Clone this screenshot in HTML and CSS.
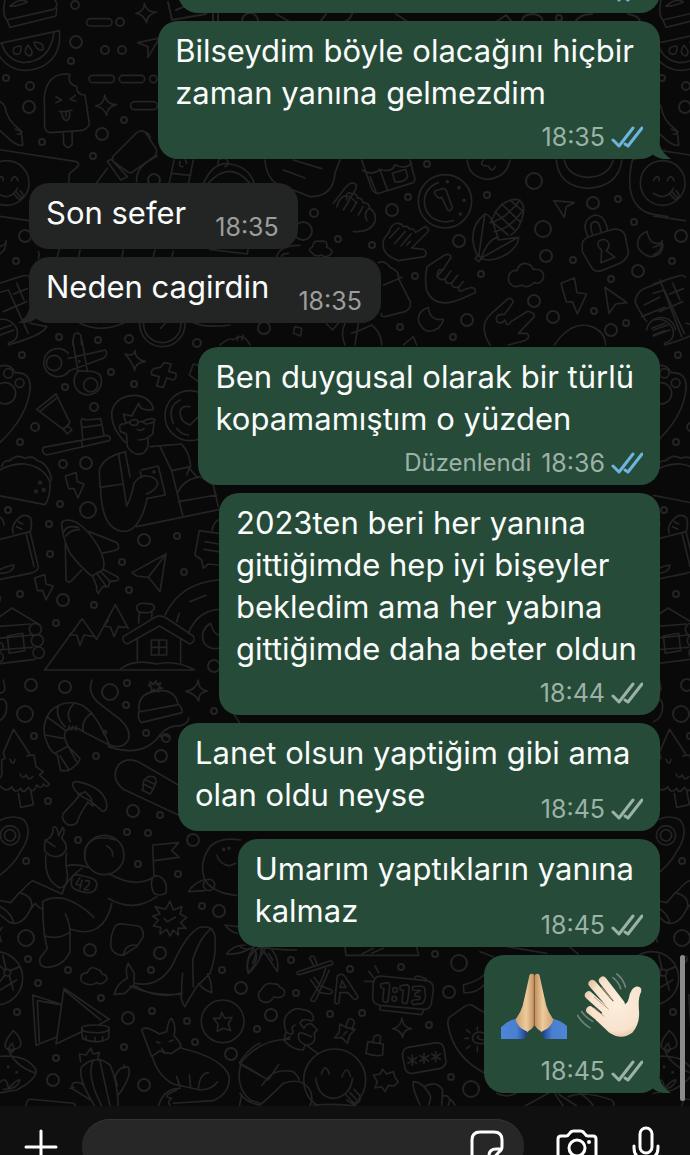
FILE: index.html
```html
<!DOCTYPE html>
<html lang="tr">
<head>
  <meta charset="UTF-8" />
  <meta name="viewport" content="width=device-width, initial-scale=1.0"/>
  <title>Sohbet</title>
  <link rel="stylesheet" href="styles.css">
</head>
<body>

  <!-- wallpaper -->
  <svg class="wallpaper" viewBox="0 0 690 1155" preserveAspectRatio="xMidYMin slice" aria-hidden="true">
    <defs>
      <symbol id="ticks" viewBox="0 0 32 22">
        <path d="M2 14 L8 20 L22 2 M14 18 L17 20 L31 2" fill="none" stroke="currentColor" stroke-width="3" stroke-linecap="round" stroke-linejoin="round"/>
      </symbol>
      <symbol id="tail" viewBox="0 0 20 20">
        <path d="M8 0 C8 7 11 14 20 20 C12 21 5 19 0 14 Z" fill="currentColor" stroke="none"/>
      </symbol>
    </defs>
    <g id="tile">
      <g class="dots">
        <circle cx="75" cy="5" r="4"/><circle cx="76" cy="42" r="6"/><circle cx="105" cy="50" r="4"/><circle cx="122" cy="50" r="4"/>
        <circle cx="71" cy="61" r="3"/><circle cx="120" cy="22" r="4"/><circle cx="6" cy="78" r="3"/><circle cx="30" cy="86" r="4"/>
        <circle cx="29" cy="107" r="6"/><circle cx="42" cy="142" r="3"/><circle cx="124" cy="120" r="3"/><circle cx="102" cy="134" r="6"/>
        <circle cx="93" cy="156" r="3"/><circle cx="25" cy="236" r="6"/><circle cx="16" cy="261" r="3"/><circle cx="154" cy="180" r="6"/>
        <circle cx="314" cy="213" r="4"/><circle cx="303" cy="231" r="9"/><circle cx="338" cy="239" r="3"/><circle cx="372" cy="245" r="3"/>
        <circle cx="59" cy="337" r="3"/><circle cx="98" cy="340" r="3"/><circle cx="129" cy="339" r="4"/><circle cx="197" cy="343" r="4"/><circle cx="264" cy="328" r="6"/>
        <circle cx="427" cy="164" r="3"/><circle cx="408" cy="197" r="3"/><circle cx="392" cy="210" r="6"/><circle cx="487" cy="195" r="3"/>
        <circle cx="534" cy="181" r="8"/><circle cx="593" cy="203" r="6"/><circle cx="618" cy="199" r="3"/><circle cx="634" cy="222" r="3"/>
        <circle cx="543" cy="229" r="8"/><circle cx="459" cy="241" r="6"/><circle cx="546" cy="256" r="6"/><circle cx="573" cy="260" r="3"/>
        <circle cx="638" cy="271" r="6"/><circle cx="415" cy="276" r="3"/><circle cx="481" cy="274" r="3"/><circle cx="611" cy="279" r="3"/>
        <circle cx="534" cy="301" r="6"/><circle cx="553" cy="317" r="6"/><circle cx="594" cy="311" r="3"/><circle cx="626" cy="323" r="3"/>
        <circle cx="611" cy="330" r="6"/><circle cx="467" cy="320" r="6"/><circle cx="400" cy="327" r="3"/><circle cx="453" cy="337" r="3"/>
        <circle cx="22" cy="355" r="3"/><circle cx="111" cy="372" r="3"/><circle cx="65" cy="387" r="3"/><circle cx="134" cy="384" r="3"/>
        <circle cx="94" cy="407" r="4"/><circle cx="35" cy="427" r="4"/><circle cx="20" cy="442" r="3"/><circle cx="63" cy="464" r="4"/>
        <circle cx="86" cy="463" r="6"/><circle cx="60" cy="504" r="3"/><circle cx="88" cy="510" r="8"/><circle cx="8" cy="510" r="3"/>
        <circle cx="49" cy="524" r="3"/><circle cx="144" cy="540" r="6"/><circle cx="177" cy="536" r="3"/><circle cx="50" cy="554" r="3"/>
        <circle cx="122" cy="562" r="3"/><circle cx="184" cy="572" r="3"/><circle cx="129" cy="590" r="3"/><circle cx="20" cy="594" r="3"/>
        <circle cx="63" cy="600" r="6"/><circle cx="94" cy="605" r="3"/><circle cx="56" cy="623" r="3"/><circle cx="214" cy="666" r="6"/>
        <circle cx="31" cy="685" r="6"/><circle cx="65" cy="687" r="6"/><circle cx="110" cy="692" r="8"/><circle cx="127" cy="683" r="3"/>
        <circle cx="126" cy="705" r="3"/><circle cx="25" cy="714" r="8"/><circle cx="34" cy="736" r="3"/><circle cx="214" cy="711" r="3"/>
        <circle cx="146" cy="733" r="3"/><circle cx="166" cy="738" r="4"/><circle cx="96" cy="756" r="3"/><circle cx="161" cy="756" r="6"/>
        <circle cx="48" cy="801" r="3"/><circle cx="133" cy="811" r="6"/><circle cx="160" cy="815" r="3"/><circle cx="127" cy="832" r="3"/>
        <circle cx="148" cy="833" r="3"/><circle cx="78" cy="840" r="3"/><circle cx="26" cy="861" r="3"/><circle cx="193" cy="840" r="6"/>
        <circle cx="138" cy="864" r="3"/><circle cx="178" cy="874" r="3"/><circle cx="202" cy="906" r="3"/><circle cx="219" cy="911" r="6"/>
        <circle cx="26" cy="938" r="8"/><circle cx="90" cy="950" r="6"/><circle cx="28" cy="959" r="3"/><circle cx="160" cy="953" r="6"/>
        <circle cx="68" cy="970" r="3"/><circle cx="151" cy="970" r="3"/><circle cx="38" cy="983" r="3"/><circle cx="222" cy="970" r="3"/>
        <circle cx="241" cy="988" r="6"/><circle cx="101" cy="998" r="3"/><circle cx="17" cy="1012" r="3"/><circle cx="128" cy="1018" r="6"/>
        <circle cx="152" cy="1011" r="3"/><circle cx="187" cy="1021" r="3"/><circle cx="195" cy="1042" r="3"/><circle cx="257" cy="1029" r="3"/>
        <circle cx="124" cy="1047" r="3"/><circle cx="56" cy="1058" r="3"/><circle cx="53" cy="1080" r="6"/><circle cx="231" cy="1054" r="6"/><circle cx="144" cy="1085" r="6"/>
        <circle cx="291" cy="960" r="3"/><circle cx="350" cy="969" r="3"/><circle cx="401" cy="967" r="3"/><circle cx="435" cy="954" r="3"/>
        <circle cx="459" cy="963" r="8"/><circle cx="296" cy="993" r="3"/><circle cx="449" cy="992" r="6"/><circle cx="271" cy="1015" r="6"/>
        <circle cx="330" cy="1014" r="3"/><circle cx="362" cy="1013" r="3"/><circle cx="429" cy="1025" r="3"/><circle cx="451" cy="1077" r="3"/><circle cx="471" cy="1089" r="8"/>
      </g>

      <!-- top left: burger, melon, ice cream, bottle -->
      <g transform="scale(.3333)">
        <path d="M15 0 Q5 40 20 60 L160 28 Q178 20 165 0 M22 62 L30 82 L168 48 L170 26 M30 18 Q60 -8 82 6 Q50 20 30 18"/>
        <path d="M-8 132 L178 92 Q186 170 125 200 Q40 235 -8 160 M6 132 Q20 180 70 188 Q150 185 162 98"/>
        <path d="M62 138 Q30 140 44 162 Q66 168 62 138 M84 136 Q66 160 88 168 Q106 160 84 136 M102 126 Q108 152 128 150 Q136 128 102 126"/>
        <rect x="260" y="56" width="76" height="22" rx="11"/><rect x="267" y="226" width="76" height="22" rx="11"/><rect x="358" y="226" width="76" height="22" rx="11"/><rect x="392" y="305" width="80" height="24" rx="11"/><circle cx="460" cy="237" r="11"/>
        <path d="M433 10 Q440 38 470 36 Q440 44 440 68 Q430 42 408 40 Q434 34 433 10Z"/>
        <path d="M314 285 Q320 314 349 314 Q320 322 320 346 Q312 322 287 318 Q314 312 314 285Z"/>
        <path d="M413 128 L480 114 M413 128 L444 140 L444 172 L475 120"/>
        <path d="M134 380 L133 290 Q140 222 200 222 L210 224 Q200 250 230 260 Q230 285 255 285 L268 372 Q262 390 240 392 L150 398 Q136 396 134 380Z M190 397 L191 432 Q204 452 217 432 L216 395"/>
        <path d="M168 290 L185 300 L168 308 M226 286 L210 298 L228 304 M178 334 Q200 336 216 330 M184 336 Q188 360 200 362 Q212 356 208 334 M198 337 V350"/>
        <path d="M-8 300 Q10 310 15 320 Q20 360 60 390 Q66 400 68 436 Q50 440 20 410 L-8 385 M46 388 L66 395 Q64 405 52 402"/>
        <path d="M340 468 L408 400 Q420 388 435 396 L468 446 Q474 460 462 470 L395 518 Q385 520 378 512 L342 486 Q334 478 340 468Z M322 484 L362 540 L382 530 L334 478Z M425 393 Q445 395 452 412 M472 468 Q405 500 410 545 M322 505 L290 548"/>
        <path d="M-8 448 L225 484 Q242 488 233 500 L208 522 L206 548 M-8 648 L88 662"/>
        <circle cx="20" cy="549" r="67"/><path d="M34 542 Q44 518 54 542 M-8 542 Q8 518 10 542 M-8 580 Q30 605 52 565 M40 580 L58 600 Q72 592 68 582 L60 572 M48 575 L64 594"/>
        <path d="M508 548 L522 480 M566 548 L580 480 M514 520 L572 526 M540 484 Q536 502 548 500 M560 490 L556 480 M612 548 Q640 484 690 492 Q745 500 762 548 M626 548 Q690 480 748 548 M655 498 Q650 470 676 475 Q695 490 675 500 M795 480 Q800 560 880 570 L930 590 Q1000 590 1005 520 L1020 480 M850 510 L915 534 M880 480 L965 506 M1010 620 Q1030 560 1070 610"/>
        <path d="M-8 852 L60 830 Q84 822 88 832 M-8 880 L25 870 L85 1000 M40 882 L82 866 M50 850 L72 900 M10 935 L80 905 M90 970 L140 980 Q130 1005 25 1035 M-8 960 Q30 950 50 985 Q60 1020 25 1030 M-8 990 L35 975 M-8 1008 L42 990 M-8 742 Q20 735 18 722 Q20 755 -8 765"/>
        <path d="M115 755 Q120 765 115 775 M178 748 L172 770 M240 750 L236 770 M370 750 L366 770 M465 750 L460 770 M520 755 L515 770 M630 748 L742 762 L744 748 M830 770 Q840 735 900 736 M845 770 Q845 760 865 760 M938 740 Q938 720 960 724 Q985 720 980 742 Q1005 750 990 765 Q975 775 965 765 Q945 772 938 760Q920 750 938 740"/>
        <circle cx="487" cy="972" r="68"/><circle cx="487" cy="972" r="56"/><path d="M482 985 L505 960 M218 1035 L222 1005 Q230 992 242 1005 L245 1035 M240 970 Q300 1000 370 970 M660 1035 Q690 1010 700 1020 Q730 995 750 1035 M712 1022 L715 1008 M725 1020 L730 1006 M580 968 Q620 985 690 975 M880 1000 L885 980 L905 985 L902 1008Z M980 972 L998 990 L1015 970"/>
      </g>

      <!-- top strip between bubbles -->
      <path d="M168 2 L172 20 L206 14 M176 10 L200 0 M213 14 V22 M218 14 V22 M242 21 A8 8 0 0 1 258 21 M276 14 L290 22 M326 14 L320 22 M352 14 Q350 20 344 22 M396 14 Q405 20 408 22 M496 22 L506 15 L512 22 M522 22 Q522 14 534 14 Q544 16 542 22 M575 22 Q580 14 592 14 M628 14 Q640 16 640 22"/><circle cx="559" cy="18" r="3"/>

      <!-- right of the incoming messages -->
      <g transform="translate(345 0) scale(.3333)">
        <path d="M50 480 L78 560 Q84 582 102 580 L205 548 Q214 540 205 520 L195 480 M52 510 Q80 530 105 508 Q140 520 150 494 Q180 510 200 490 M105 510 L128 572 M75 530 L95 580 M142 520 L150 545 Q180 548 188 530 L182 508Z M367 480 Q370 530 425 538 Q485 535 495 480 M415 480 Q400 500 430 498 Q440 520 452 500 M634 480 Q640 560 730 565 Q820 560 831 480 M658 480 Q670 530 730 532 Q790 530 805 480"/>
        <circle cx="300" cy="604" r="80"/><path d="M280 548 Q236 565 238 610 Q245 660 300 666 L325 662 M270 582 Q264 572 280 570 L294 566 Q300 564 304 572 L322 622 Q318 636 308 630 L290 592 Q282 600 270 582"/>
        <circle cx="307" cy="545" r="3"/><circle cx="342" cy="563" r="3"/><circle cx="357" cy="601" r="3"/><circle cx="346" cy="642" r="3"/>
        <path d="M-35 610 L2 562 Q20 540 34 555 Q36 570 12 598 M5 600 Q0 570 22 582 Q35 578 38 595 Q52 592 54 608 Q74 608 74 625 Q96 640 90 665 Q75 700 25 694 M-5 630 L14 600 M18 635 L36 605 M40 645 L54 620 M72 625 Q54 640 66 662"/>
        <path d="M130 700 Q140 668 160 670 Q172 672 175 680 Q190 676 194 688 Q208 684 212 698 L240 680 Q256 686 248 696 L200 744 L236 748 Q250 758 238 770 L160 782 Q100 760 118 715Z M134 714 L162 684 M148 732 L180 695 M168 738 L198 702 M185 735 L196 724"/>
        <path d="M246 800 L298 766 Q316 758 318 772 L292 812 Q280 800 276 830 Q290 845 298 836 Q305 856 318 848 Q324 868 340 860 Q340 880 355 870 L380 862 Q394 866 390 878 L350 896 Q270 930 245 872 Q238 840 246 800Z M278 828 L298 804 M300 838 L318 812 M320 850 L338 826 M340 864 L355 844"/>
        <path d="M435 945 L490 895 Q505 895 504 908 L478 944 Q450 940 455 965 Q470 975 480 960 Q486 985 498 965 L548 934 Q570 938 568 950 L520 1000 L545 1000 Q560 1010 540 1022 L490 1035 M435 945 Q400 980 435 1035"/>
        <path d="M398 768 Q360 690 420 642 Q440 640 460 720 M420 642 Q412 690 402 765 M460 720 L520 712 Q525 730 490 760 Q440 790 408 775 Q430 715 460 712 M520 712 L412 772 M390 776 L400 766 L410 775 L402 785Z M438 668 Q460 600 515 598 Q540 605 535 640 Q525 690 498 705 M440 665 L490 705 M450 635 L508 690 M470 612 L525 665 M495 600 L535 635 M435 668 Q480 660 525 600 M448 695 Q490 690 535 630"/>
        <path d="M626 602 L688 608 L664 620 L658 652Z"/>
        <path d="M712 730 Q715 715 738 708 L805 688 Q830 685 840 705 L850 755 Q850 775 825 790 L770 812 Q748 818 738 800 L712 755Z M728 708 Q705 660 750 645 Q780 645 788 692 M742 702 Q730 665 752 665 Q764 666 768 695 M768 788 L770 750 Q750 735 764 722 Q784 712 792 732 Q792 745 784 752 L810 772Z"/>
        <path d="M906 694 Q870 710 880 745 Q910 785 945 760 Q960 735 950 728 Q915 740 906 694Z M250 922 Q215 935 221 965 Q240 1010 280 985 Q300 960 293 958 Q255 965 250 922Z"/>
        <path d="M500 855 Q485 845 493 822 Q505 808 516 812 Q522 790 540 790 Q560 792 564 808 Q600 805 595 835 Q585 855 568 848 Q545 868 530 855 Q510 865 500 855Z"/>
        <path d="M648 850 L688 834 L696 878 L725 882 L697 942 L682 905 L664 906Z M780 862 L846 908 L812 912 L792 940Z"/>
        <path d="M862 480 Q840 580 880 620 Q900 640 930 644 L968 650 M862 480 L960 450 M870 905 Q875 875 900 865 L960 842 M870 905 Q880 930 905 965 M945 840 L1010 1010 M890 950 L960 922 M898 915 L944 892 M905 990 A44 44 0 0 1 992 990 M920 985 L960 970 M925 1005 L960 992"/>
        <path d="M100 788 Q120 780 135 802 Q165 815 160 835 L196 905 Q200 925 180 935 L120 950 Q105 950 110 940 M116 855 L172 832 M628 1035 Q680 960 740 980 Q780 995 782 1035 M175 1035 L205 1010 L215 1035 M0 1035 Q-15 1000 0 970 M20 1000 Q50 990 80 975 Q110 1000 110 1035 M40 970 L30 1035"/>
      </g>

      <!-- scissors, toothbrush, barista, taco, rocket, house -->
      <g transform="translate(0 340) scale(.3333)">
        <circle cx="162" cy="69" r="23"/><path d="M205 40 A42 42 0 1 0 208 92 L310 55 Q326 42 316 30 L205 55 M218 0 L234 95 A41 41 0 1 0 300 105 Q285 92 262 94 L246 0 M232 92 L262 94"/><circle cx="272" cy="135" r="21"/><circle cx="238" cy="64" r="2"/>
        <path d="M405 32 Q405 58 436 64 Q405 68 404 92 Q398 66 375 42 Q402 50 405 32Z M482 82 L492 68 L514 72 L506 94 L528 100 Q530 115 520 120 L500 114 L490 142 L470 138 L478 110 L455 104 Q452 90 462 86Z M568 105 L580 72 L596 76 M568 105 L596 125"/>
        <circle cx="15" cy="160" r="32"/><circle cx="25" cy="100" r="14"/><circle cx="59" cy="129" r="13"/><path d="M-8 82 Q30 65 45 98 Q95 95 90 150 Q80 235 -8 315"/>
        <path d="M110 208 L168 162 L210 248 L190 268Z M120 214 L172 172 M188 266 L205 258 L216 270 L202 282Z M130 322 L322 286 Q336 292 328 302 L140 345 Q122 338 130 322Z M244 302 L248 322 M248 295 L244 250 Q240 230 258 240 L302 236 L312 285 M250 262 L306 254"/>
        <path d="M376 308 Q330 260 336 212 Q350 165 410 166 Q450 172 460 204 M378 248 L370 222 L395 228 L416 190 Q420 215 460 208 M388 246 Q395 236 412 240 Q420 252 405 256 Q390 256 388 246Z M428 245 Q450 232 464 238 Q468 246 450 250 Q435 256 428 245Z M412 246 L428 244 M372 252 L388 246 M372 252 Q352 250 362 275 Q378 280 380 285 L382 320 Q400 350 430 340 Q448 325 444 298 M415 300 Q440 300 458 282 L462 250 M412 268 Q422 275 432 266"/>
        <path d="M300 442 L298 390 Q310 350 378 335 M300 442 L368 432 M302 445 Q305 575 375 574 Q420 570 442 475 M356 344 L380 498 Q395 470 402 430 Q420 405 440 408 Q470 410 474 432 Q468 450 440 462 M376 338 L390 410 M450 320 L545 312 Q570 340 572 380 L515 392 L480 320 M424 390 L475 378 L496 465 L440 476 M420 395 L425 412 M410 560 L660 508 M515 392 L548 526 M535 455 Q550 420 600 410 L640 435 L655 500 M535 485 L650 465 M560 405 L568 385 L590 410"/>
        <circle cx="462" cy="396" r="3"/><circle cx="570" cy="227" r="75"/><path d="M520 250 Q500 200 540 180 M570 200 Q545 195 540 215 Q540 245 570 255 L596 230 M565 285 Q545 285 530 265"/>
        <path d="M-8 395 Q30 370 75 372 Q130 380 150 425 Q152 470 135 494 L-8 466 M5 380 Q10 360 30 362 Q50 340 75 355 Q100 345 112 362 Q145 370 155 420"/><circle cx="120" cy="428" r="4"/><circle cx="108" cy="454" r="4"/><circle cx="131" cy="450" r="4"/>
        <path d="M196 408 L228 398 L232 425 L252 432 L234 474 L222 446 L206 446Z M104 714 L134 704 L138 732 L160 738 L138 780 L128 752 L112 752Z"/>
        <path d="M-8 600 L90 575 L115 680 Q115 695 90 700 L-8 720 M78 580 L102 680 M40 580 Q30 555 62 530 Q80 520 92 535 Q98 560 90 575 M55 545 L68 552 M50 560 L65 568 M-8 530 Q10 530 12 555 M0 700 Q40 700 42 675 Q10 680 -8 695"/>
        <path d="M186 560 Q180 540 205 540 Q250 545 295 620 Q320 670 308 690 L275 708 Q240 680 210 640 Q190 600 186 560Z M192 575 Q200 555 235 562 M198 588 Q210 570 238 568 M268 575 L350 608 Q362 620 350 630 L305 640 M196 610 L198 720 Q205 732 215 722 L245 690 M308 688 L352 710 Q360 720 350 722 L330 724 L325 740 L308 740 L295 760 Q288 755 290 740 L278 708 M292 702 L318 738 M302 695 L330 724"/>
        <path d="M396 698 L498 642 L480 755 L462 732 L445 712 L410 708Z M498 642 L445 712"/>
        <path d="M134 990 L246 836 L290 898 L346 794 L385 866 M225 868 L208 885 L230 885 L240 916 L252 885 L285 890 M325 840 L312 858 L332 862 L342 890 L355 860 L378 862 M134 990 H584 M412 900 V962 M542 900 V968 M370 890 L460 835 Q478 820 500 835 L580 888 Q588 905 570 912 L478 858 L382 912 Q364 905 370 890Z M360 988 Q400 955 470 972 Q530 960 580 988 M416 850 L418 818 M455 832 L456 818 M410 800 Q415 788 435 790 Q465 790 463 805 Q455 820 435 818 Q408 820 410 800Z M454 900 H500 V945 H454Z M477 900 V945 M454 922 H500"/>
        <path d="M495 825 Q540 730 655 720 M565 880 Q590 815 655 808 M570 785 L618 766 M530 845 L538 820 M632 850 Q600 870 610 905 Q625 930 655 925 M632 850 Q640 880 655 885 M598 572 L655 580 M598 572 L585 645 L605 660 L610 685 L625 672 L655 675 M615 605 L655 612 M612 628 L655 635 M636 572 Q640 548 655 540"/>
        <path d="M-8 835 L36 804 L120 855 M-8 860 L90 852 M-8 895 L98 885 M-8 930 L98 922 M-8 972 L105 958 M22 888 L68 880 L74 932 L28 940Z M-8 795 Q5 780 0 770"/><circle cx="106" cy="868" r="18"/><circle cx="112" cy="902" r="18"/><circle cx="116" cy="938" r="17"/><circle cx="-2" cy="920" r="12"/><circle cx="-4" cy="952" r="14"/>
      </g>

      <!-- shrimp, tree, astronaut, whale, fox, cactus -->
      <g transform="translate(0 680) scale(.3333)">
        <path d="M276 0 Q260 40 300 72 L360 118 Q395 150 385 180 Q365 210 330 195 M325 200 Q430 235 480 165 Q505 135 540 138 Q565 130 566 115 M480 170 Q500 160 510 175"/>
        <path d="M328 195 Q290 100 245 75 Q190 55 150 95 Q120 140 140 185 Q150 215 172 225 L182 272 L205 272 Q240 250 240 235 L205 200 Q185 165 200 150 Q225 135 250 155 L328 195 M250 155 Q245 130 260 112 L275 98 M225 68 Q195 95 210 125 M175 78 Q165 110 195 140 M140 110 L195 150 M135 165 L190 175 M165 220 L205 198 M180 228 L206 268 M205 200 L230 245 M205 150 L208 138 M215 150 L218 138 M226 150 L228 138"/><circle cx="314" cy="157" r="5"/>
        <path d="M418 95 Q410 45 460 35 Q525 20 535 75 M416 96 L536 74 Q548 84 546 98 L424 128 Q412 115 416 96Z M445 15 L452 20 L450 5 L460 14 L468 2 L470 14 L482 8 L477 20 L488 25 L474 26 L476 36 L464 28 L454 34 L455 24Z"/>
        <path d="M595 0 Q594 30 622 33 Q594 38 596 63 Q588 42 558 34 Q588 30 595 0Z M700 100 L720 130"/>
        <path d="M-8 300 Q10 290 5 270 L5 240 L15 235 L10 218 L40 148 L72 195 L90 225 L80 228 L102 225 L108 260 L130 275 L118 285 L148 312 Q140 325 130 312 Q125 330 110 315 Q100 345 85 322 Q70 345 62 325 Q45 345 35 320 Q20 340 0 318 M30 238 Q40 262 45 238 M60 282 Q68 300 78 285 Q85 305 98 290 M55 340 L62 382 L100 374 L92 330 M-8 60 Q20 50 20 80 Q20 115 -8 125 M-8 40 Q15 40 15 25 L10 0"/>
        <path d="M220 308 Q225 302 245 308 Q310 325 320 370 Q322 395 308 394 L270 362 Q230 345 218 318Z M234 345 L255 335 L272 352 L280 378 L262 366 M190 400 Q210 380 236 350 M262 370 Q240 400 230 430 Q205 445 190 420 Q185 410 190 400"/>
        <path d="M535 405 L370 328 Q330 295 355 255 Q380 230 415 245 L535 315 M430 325 Q425 300 445 290 Q470 285 468 305 Q460 330 450 342 L425 330Z M430 312 L455 325 M438 300 L462 312"/>
        <circle cx="30" cy="466" r="29"/><circle cx="30" cy="466" r="17"/><path d="M-8 425 Q40 400 72 420 Q100 455 65 510 Q40 560 -8 590"/>
        <path d="M135 515 Q130 485 142 478 Q160 470 160 442 Q172 435 176 468 L188 442 Q198 450 185 475 Q202 490 198 510 Q180 540 148 525Z M135 480 L165 500 M138 525 Q130 600 180 624 Q205 620 202 580 Q195 545 200 520 M198 558 Q230 550 262 562 M186 642 Q195 600 245 565 M-8 660 L32 668 L58 638 M58 640 Q85 610 98 602 L186 642 M60 638 Q100 650 95 680 Q70 740 30 728 L-8 698 M-8 675 Q40 700 40 730 M90 690 L106 670 Q120 690 130 685"/>
        <circle cx="313" cy="525" r="59"/><path d="M256 540 Q245 490 290 475 Q320 470 345 480 M320 498 Q340 508 338 528 M325 580 Q400 625 455 595 M325 655 Q400 700 470 650 M455 602 Q458 585 475 588 Q505 600 498 640 Q478 650 462 640 Q452 620 455 602Z M462 590 L458 495 L536 488 L515 512 L538 532 L462 542 M215 600 Q215 580 240 585 L275 595 Q300 605 285 630 Q270 645 235 632 Q208 625 215 600 M240 592 L228 612 L242 616 M246 600 L240 626 M256 602 Q276 600 265 616 L252 628 L266 630"/>
        <path d="M128 665 Q150 650 190 655 Q240 670 282 712 M128 665 Q128 760 142 805 L120 835 Q115 860 140 862 Q190 860 210 815 L210 745 Q205 720 196 702 M135 768 Q175 780 208 758 M212 748 Q310 780 336 670"/>
        <path d="M510 664 L520 690 L546 680 L540 702 L560 712 L542 728 L558 745 L534 744 L535 765 L520 750 L510 768 L500 748 L480 762 L482 742 L460 738 L475 720 L458 708 L480 702 L465 680 L496 688Z M492 715 L502 725 L526 712 M345 740 Q350 730 370 732 L415 738 Q432 745 430 770 L410 800 L370 826 Q340 825 332 800 Q332 760 345 740 M370 826 Q375 790 412 796"/>
        <path d="M722 480 Q660 470 630 500 Q595 550 615 600 Q640 640 710 646 M650 525 Q660 555 690 557 L708 550 M565 635 Q580 610 610 600 M565 635 L614 632"/><circle cx="627" cy="615" r="17"/><circle cx="671" cy="508" r="3"/><circle cx="687" cy="505" r="3"/>
        <path d="M343 943 Q350 910 382 895 Q375 865 385 850 L403 880 L402 910 Q480 925 520 850 Q560 760 600 742 Q640 735 645 770 Q650 830 630 880 L590 920 Q565 960 555 980 Q540 960 545 940 Q545 900 548 880 M343 943 L375 940 L400 915 Q470 960 542 940 M580 920 L578 840 Q600 770 635 745 M595 910 Q610 930 635 938 Q635 900 622 882 M390 918 Q460 950 545 942"/>
        <path d="M675 735 L712 740 M675 735 Q690 755 712 760 M680 822 Q700 795 735 795 M680 822 Q720 825 750 805 M745 880 Q735 840 760 805 Q785 830 745 880 M780 830 L795 810"/>
        <path d="M245 905 Q235 880 262 878 Q270 855 292 868 Q305 870 305 882 Q325 885 320 900 Q305 918 290 908 Q270 922 245 905Z"/>
        <circle cx="-12" cy="895" r="80"/><circle cx="22" cy="878" r="10"/><path d="M-8 850 L15 872 M30 872 L60 860 M28 888 L40 930 M15 885 L-8 915 M18 868 L8 825 M-8 765 L6 742 M-8 745 L4 785 M-8 935 L50 900"/>
        <path d="M98 945 L180 972 M98 945 L108 1096 L168 1072 M112 962 L182 974 M112 962 L118 1085 M192 925 L168 1092 L245 1055 M192 925 L328 1018 L300 1032 M192 930 L302 1020 M245 1045 Q245 1035 285 1035 Q330 1035 328 1048 Q320 1060 285 1058 Q245 1058 245 1045 M245 1048 L248 1076 Q290 1095 325 1076 L328 1048 M258 1068 V1080 M285 1072 V1084 M308 1070 V1080"/>
        <path d="M40 1052 Q15 1080 15 1100 Q30 1120 60 1100 Q70 1080 40 1052 M36 1090 Q20 1105 30 1118 Q50 1115 36 1090 M-8 1130 Q80 1120 108 1170 Q110 1200 50 1230 L-8 1240 M30 1120 Q50 1160 108 1180 M-8 1215 Q20 1180 25 1225 Q55 1195 60 1200 Q50 1230 10 1228 M78 1278 Q80 1255 95 1258 L220 1270 Q226 1272 226 1282"/><circle cx="24" cy="1160" r="2"/><circle cx="50" cy="1177" r="2"/>
        <path d="M285 1280 Q230 1190 245 1160 Q290 1120 330 1155 Q352 1200 355 1280 M305 1278 Q260 1190 278 1145 M330 1278 Q310 1190 300 1142 M242 1145 L238 1122 L258 1125 L272 1105 L280 1122 L298 1118 L292 1140 M352 1218 L345 1190 Q360 1155 385 1162 Q398 1185 355 1245 M272 1260 L215 1225 L218 1210 Q245 1200 255 1225 M210 1225 L222 1222 M372 1155 V1165"/>
        <path d="M448 1112 L425 1050 Q435 1035 478 1062 L500 1055 Q505 1020 515 1015 Q530 1040 522 1068 Q545 1090 542 1102 L515 1120 Q490 1120 480 1112 L455 1130 L440 1090 M485 1105 L495 1120 M470 1085 L480 1090 M508 1085 L520 1080 M545 1105 Q670 1135 688 1190 Q690 1240 640 1262 L520 1270 M456 1128 Q475 1190 520 1212 L600 1230 Q640 1228 652 1205 M530 1190 L540 1220 M568 1185 L572 1222 M595 1225 Q600 1180 625 1178 M475 1280 Q490 1225 540 1225 M530 1230 Q480 1250 515 1255 Q500 1268 510 1275"/>
        <circle cx="668" cy="1024" r="64"/><path d="M665 997 L675 1015 L696 1012 L685 1032 L692 1052 L670 1045 L652 1054 L654 1032 L640 1015 L660 1015Z M780 1090 Q750 1100 718 1148 L780 1185 M722 1155 Q705 1220 750 1260 L780 1270 M725 1245 L718 1280"/>
      </g>

      <!-- bottom middle -->
      <g transform="translate(240 940) scale(.3333)">
        <path d="M0 20 Q20 35 42 22 M60 22 Q10 50 25 100 Q70 60 62 22 M62 22 Q90 60 112 95 Q120 50 88 22 M62 22 Q120 30 170 30 M85 40 L98 60 M38 70 L48 42"/>
        <path d="M172 96 L272 62 Q282 68 276 74 L178 104 Q168 104 172 96Z M210 55 L222 78 M222 50 L232 74 M208 56 Q214 44 222 50 M258 80 Q250 120 212 180 Q222 190 228 178 L268 90 M222 112 L242 138 L275 150 Q282 158 268 162 L240 158 L212 120 M284 186 L292 108 Q304 98 314 108 L354 170 Q350 182 340 176 L324 158 L300 158 L297 188 Q288 196 284 186 M300 142 L306 122 L318 142Z"/>
        <path d="M60 180 Q48 160 65 148 Q78 125 100 132 Q115 130 118 140 Q140 150 132 165 Q120 178 102 170 Q85 198 60 180Z"/>
        <path d="M400 130 Q402 108 422 108 L560 122 Q582 126 580 150 L574 192 Q568 210 550 208 L420 196 Q398 192 398 172Z M420 198 V210 L545 224 L552 210 M522 118 Q525 105 542 110 L558 116 L556 124 M374 124 L398 124 M386 94 L400 112 M405 78 L416 98"/>
        <path d="M422 132 L440 128 Q450 128 449 140 L444 184 Q432 190 428 180 L432 146 L422 142Z M480 138 L500 134 Q508 136 508 146 L502 188 Q490 194 486 184 L490 152 L480 148Z M518 140 L544 138 Q560 142 554 156 Q562 172 548 190 L520 194 Q510 184 520 180 L538 178 L540 170 L525 168 L526 160 L542 152 L518 150Z"/><circle cx="465" cy="150" r="7"/><circle cx="463" cy="176" r="7"/>
        <path d="M315 22 L318 46 L536 46 L530 22 M366 42 L400 25 M395 40 L430 25 M720 35 L760 50 M670 135 Q710 125 732 105 M670 135 L672 158 Q710 160 732 135 M730 216 L695 195 Q680 192 670 202 L628 232 Q622 240 624 255 Q640 350 732 398 M732 310 Q695 315 698 290 Q708 270 732 280 M732 300 Q705 298 716 288 M675 295 H685 M680 270 L690 278 M680 325 L690 318 M712 262 V270 M712 320 V335"/>
        <path d="M150 290 L132 300 L138 275 Q125 235 145 220 Q165 200 185 208 Q215 210 220 232 Q222 248 205 240 Q185 235 180 250 L192 265 Q200 248 215 252 L232 270 L222 280 Q232 310 200 316 Q172 308 176 282 Q180 275 195 282 L215 290 M138 275 Q155 290 160 275 Q150 262 165 255 M132 300 Q155 330 190 330 L195 315 M0 372 Q60 295 150 298 M200 316 L235 342 M0 372 L85 420 L116 374 M66 436 L85 412 M85 412 Q110 385 160 395 Q175 410 178 420 M60 495 Q90 470 130 430 Q190 410 212 455 Q220 480 210 498 M0 460 Q20 490 60 495"/>
        <circle cx="284" cy="420" r="93"/><path d="M227 415 Q235 472 280 475 Q330 470 338 415 M244 402 Q256 365 268 402 M306 410 Q320 370 332 410 M318 465 L345 492 Q368 485 358 465 L342 448 M330 458 L350 480 M220 495 Q290 490 350 498 L320 480"/>
        <path d="M300 252 L318 262 L345 268 L330 285 L322 310 L305 292 L284 294 L298 276Z M318 258 L325 238 Q340 232 343 248 L336 268 M384 305 L430 312 L428 345 Q400 350 378 340Z M398 308 L402 290 Q418 278 422 292 L420 310 M310 285 L320 275"/>
        <path d="M486 234 Q488 262 514 266 Q488 270 488 292 Q482 270 458 266 Q484 260 486 234Z M488 350 Q485 328 505 322 L590 308 Q608 308 612 325 L618 365 Q616 382 598 386 L518 400 Q500 402 495 385Z"/>
        <path d="M517 345 V376 M504 352 L530 370 M504 370 L530 352 M552 340 V370 M540 347 L566 364 M540 364 L566 347 M587 335 V365 M575 342 L601 358 M575 358 L601 342"/>
        <path d="M400 405 L420 402 L428 388 L440 402 L460 395 L465 412 L475 425 L462 438 L445 436 L435 455 L425 440 L405 444 L412 425Z M540 495 Q515 440 520 425 Q550 425 572 470 Q570 490 565 495 M552 440 Q590 420 608 450 L605 495 M608 470 Q620 460 630 480 L625 495 M632 478 L645 495"/>
      </g>
    </g>
    <use href="#tile" x="656"/>
    <g transform="translate(480 940) scale(.3333)">
      <path d="M50 460 Q80 475 108 460 M135 498 L205 460 M225 462 L250 498 M235 462 L290 498 M300 460 Q330 480 340 498 M265 470 Q310 450 395 480 Q405 490 400 498 M80 20 L200 40 M270 22 L295 42"/>
    </g>
  </svg>

  <main class="chat">
    <div class="message out long">
      <span class="meta"><time>18:35</time> <svg class="ticks read" role="img" aria-label="Okundu"><use href="#ticks"/></svg></span>
    </div>

    <div class="message out">
      <p>Bilseydim böyle olacağını hiçbir<br>zaman yanına gelmezdim</p>
      <span class="meta"><time>18:35</time> <svg class="ticks read" role="img" aria-label="Okundu"><use href="#ticks"/></svg></span>
      <svg class="tail"><use href="#tail"/></svg>
    </div>

    <div class="message in first">
      <p>Son sefer</p>
      <span class="meta"><time>18:35</time></span>
    </div>

    <div class="message in">
      <p>Neden cagirdin</p>
      <span class="meta"><time>18:35</time></span>
      <svg class="tail"><use href="#tail"/></svg>
    </div>

    <div class="message out first">
      <p>Ben duygusal olarak bir türlü<br>kopamamıştım o yüzden</p>
      <span class="meta"><span class="edited">Düzenlendi</span> <time>18:36</time> <svg class="ticks read" role="img" aria-label="Okundu"><use href="#ticks"/></svg></span>
    </div>

    <div class="message out medium">
      <p>2023ten beri her yanına<br>gittiğimde hep iyi bişeyler<br>bekledim ama her yabına<br>gittiğimde daha beter oldun</p>
      <span class="meta"><time>18:44</time> <svg class="ticks" role="img" aria-label="İletildi"><use href="#ticks"/></svg></span>
    </div>

    <div class="message out compact long">
      <p>Lanet olsun yaptiğim gibi ama<br>olan oldu neyse</p>
      <span class="meta"><time>18:45</time> <svg class="ticks" role="img" aria-label="İletildi"><use href="#ticks"/></svg></span>
    </div>

    <div class="message out compact">
      <p>Umarım yaptıkların yanına<br>kalmaz</p>
      <span class="meta"><time>18:45</time> <svg class="ticks" role="img" aria-label="İletildi"><use href="#ticks"/></svg></span>
    </div>

    <div class="message out sticker">
      <div class="emojis">
        <svg viewBox="64 94 202 202" role="img" aria-label="Dua eden eller">
          <defs>
            <linearGradient id="skin" x1="0" x2="1"><stop offset="0" stop-color="#c79a68"/><stop offset=".6" stop-color="#edcb9c"/><stop offset="1" stop-color="#c08e5e"/></linearGradient>
            <linearGradient id="sleeve" x1="0" x2="1"><stop offset="0" stop-color="#4d86d8"/><stop offset=".6" stop-color="#4a7fd0"/><stop offset="1" stop-color="#1d3d86"/></linearGradient>
            <g id="hand">
              <path d="M150 106 Q151 95 159 96 Q166 96 166 106 L166 250 Q164 262 150 270 Q144 275 140 282 L104 240 Q122 222 130 195 L137 165 Z" fill="url(#skin)"/>
              <path d="M64 260 Q84 240 108 235 Q114 262 144 273 Q146 286 134 296 H64Z" fill="url(#sleeve)"/>
            </g>
          </defs>
          <use href="#hand"/>
          <use href="#hand" transform="matrix(-1 0 0 1 333 0)"/>
          <path d="M166 104 V256" stroke="#8d6038" stroke-width="3"/>
        </svg>
        <svg viewBox="292 94 202 202" role="img" aria-label="El sallama">
          <defs>
            <radialGradient id="palm" gradientUnits="userSpaceOnUse" cx="415" cy="190" r="115"><stop offset="0" stop-color="#fdeedd"/><stop offset=".7" stop-color="#f8e3cd"/><stop offset="1" stop-color="#dfb898"/></radialGradient>
          </defs>
          <g stroke="url(#palm)" stroke-width="24" stroke-linecap="round" fill="none">
            <path d="M371 117 L426 188"/><path d="M339 127 L402 200"/><path d="M328 162 L395 222"/><path d="M332 208 L385 250"/>
          </g>
          <path d="M350 238 L386 196 L412 172 Q420 184 432 190 Q446 192 451 170 Q456 140 474 135 Q492 134 488 152 Q478 170 482 212 Q484 250 462 276 Q428 302 390 276 Z" fill="url(#palm)"/>
          <path d="M367 137 L402 178 M345 168 L388 204 M344 201 L374 226" stroke="#c49a78" stroke-width="3" stroke-linecap="round" fill="none"/>
          <path d="M402 108 Q420 122 426 142 M414 97 Q434 112 440 137 M306 212 Q318 230 340 242 M294 224 Q308 248 332 262" stroke="#71837c" stroke-width="5" stroke-linecap="round" fill="none"/>
        </svg>
      </div>
      <span class="meta"><time>18:45</time> <svg class="ticks" role="img" aria-label="İletildi"><use href="#ticks"/></svg></span>
      <svg class="tail"><use href="#tail"/></svg>
    </div>

    <div class="scrollbar"></div>
  </main>

  <form class="composer">
    <button type="button" aria-label="Ekle">
      <svg width="34" height="40" viewBox="0 0 34 40"><path d="M2 20 H32 M17 4 V36"/></svg>
    </button>
    <div class="field">
      <input type="text" aria-label="Mesaj">
      <button type="button" aria-label="Çıkartma">
        <svg width="34" height="34" viewBox="0 0 34 34"><path d="M10 2 H24 Q32 2 32 10 V17 Q32 20 29 22 L22 30 Q20 32 16 32 H10 Q2 32 2 24 V10 Q2 2 10 2Z M19 31 V26 Q19 19 26 19 H31"/></svg>
      </button>
    </div>
    <button type="button" class="camera" aria-label="Kamera">
      <svg width="42" height="36" viewBox="0 0 42 36"><path d="M5 7 H10 Q12 7 13 5 L14 4 Q15 2 18 2 H24 Q27 2 28 4 L29 5 Q30 7 32 7 H37 Q40 7 40 10 V30 Q40 34 36 34 H6 Q2 34 2 30 V10 Q2 7 5 7Z"/><circle cx="21" cy="19" r="8"/><circle cx="33" cy="13" r="2" class="lens"/></svg>
    </button>
    <button type="button" aria-label="Sesli mesaj">
      <svg width="28" height="42" viewBox="0 0 28 42"><rect x="8" y="2" width="12" height="25" rx="6"/><path d="M2 20 V22 Q2 33 14 33 Q26 33 26 22 V20 M14 33 V40"/></svg>
    </button>
  </form>

</body>
</html>
```
FILE: styles.css
```css
* {
  box-sizing: border-box;
}
body {
  font-family: Inter, "Liberation Sans", sans-serif;
  background-color: #090909;
  color: #fafcfb;
  margin: 0;
  height: 100vh;
  display: flex;
  flex-direction: column;
  overflow: hidden;
}
.wallpaper {
  position: absolute;
  top: 0;
  left: 0;
  width: 100%;
  height: 100%;
  z-index: -1;
  fill: none;
  stroke: #242424;
  stroke-width: 5;
  stroke-linecap: round;
  stroke-linejoin: round;
}
.wallpaper .dots,
.wallpaper #tile > path,
.wallpaper #tile > circle {
  stroke-width: 2;
}
.chat {
  flex: 1;
  min-height: 0;
  position: relative;
  overflow: hidden;
  display: flex;
  flex-direction: column;
  justify-content: flex-end;
  align-items: flex-end;
  gap: 8px;
  padding: 0 30px 13px 29px;
}
.message {
  position: relative;
  flex: none;
  border-radius: 20px;
  padding: 9px 26px 7px 17px;
  font-size: 31px;
  line-height: 42px;
}
.message p {
  margin: 0;
}
.out {
  background-color: #264b39;
  color: #fafcfb;
}
.in {
  background-color: #232524;
  align-self: flex-start;
  display: flex;
  align-items: flex-end;
  gap: 29px;
  padding: 0 19px 7px 17px;
}
.in p {
  padding: 9px 0 8px;
}
.first {
  margin-top: 16px;
}
.medium {
  min-width: 441px;
}
.long {
  min-width: 482px;
}
.medium,
.sticker {
  padding-right: 17px;
}
.meta {
  display: flex;
  justify-content: flex-end;
  align-items: center;
  gap: 6px;
  height: 30px;
  margin-top: 8px;
  margin-right: -9px;
  font-size: 25px;
  line-height: 30px;
  color: #9db2a6;
}
.medium .meta,
.sticker .meta {
  margin-right: 0;
}
.edited {
  font-size: 24px;
  margin-right: 4px;
}
.in .meta {
  margin: 0;
  color: #9c9e9d;
}
.compact .meta {
  margin-top: -22px;
}
.ticks {
  width: 32px;
  height: 22px;
}
.read {
  color: #6db5dd;
}
.tail {
  position: absolute;
  right: -11px;
  bottom: 0;
  width: 20px;
  height: 20px;
  color: #264b39;
}
.in .tail {
  right: auto;
  left: -11px;
  color: #232524;
  transform: scaleX(-1);
}
.emojis {
  display: flex;
  align-items: center;
  gap: 10px;
  height: 84px;
}
.emojis svg {
  width: 66px;
  height: 66px;
}
.scrollbar {
  position: absolute;
  right: 5px;
  bottom: 5px;
  width: 5px;
  height: 146px;
  border-radius: 3px;
  background-color: #8a8a8a;
}

/* composer */
.composer {
  flex: none;
  display: flex;
  align-items: flex-start;
  height: 49px;
  overflow: hidden;
  padding: 13px 30px 0 24px;
  background-color: #101010;
}
.composer button {
  display: flex;
  flex: none;
  align-items: center;
  height: 56px;
  padding: 0;
  border: none;
  background: none;
}
.composer svg {
  fill: none;
  stroke: #ffffff;
  stroke-width: 3;
  stroke-linecap: round;
  stroke-linejoin: round;
}
.composer .lens {
  fill: #ffffff;
  stroke: none;
}
.field {
  flex: 1;
  min-width: 0;
  display: flex;
  height: 56px;
  margin: 0 32px 0 24px;
  padding: 0 20px;
  border-radius: 28px;
  background-color: #272727;
  box-shadow: inset 0 1px #333333;
}
.field input {
  flex: 1;
  min-width: 0;
  border: none;
  outline: none;
  background: none;
  color: #ffffff;
  font: inherit;
  font-size: 31px;
}
.camera {
  margin-right: 34px;
}
```
